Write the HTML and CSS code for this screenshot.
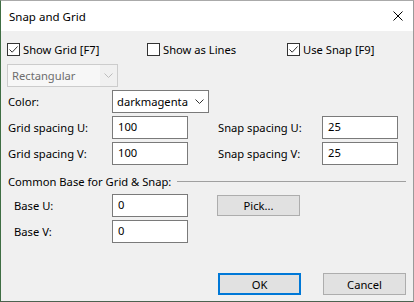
FILE: index.html
```html
<!DOCTYPE html>
<html lang="en">

<head>
    <meta charset="UTF-8">
    <title>Snap and Grid</title>
    <link rel="stylesheet" href="styles.css">
</head>

<body>
    <div class="window">
        <div class="titlebar">
            <span class="title">Snap and Grid</span>
            <svg class="close" width="10" height="10" viewBox="0 0 10 10">
                <path d="M0.5 0.5 L9.5 9.5 M9.5 0.5 L0.5 9.5" stroke="#000" stroke-width="1" />
            </svg>
        </div>

        <div class="content">
            <div class="checks">
                <label class="check">
                    <span class="box">
                        <svg width="11" height="11" viewBox="0 0 11 11"><path d="M1.5 5.5 L4.2 8.2 L9.5 2.5" fill="none" stroke="#333" stroke-width="1" /></svg>
                    </span>
                    Show Grid [F7]
                </label>
                <label class="check">
                    <span class="box"></span>
                    Show as Lines
                </label>
                <label class="check">
                    <span class="box">
                        <svg width="11" height="11" viewBox="0 0 11 11"><path d="M1.5 5.5 L4.2 8.2 L9.5 2.5" fill="none" stroke="#333" stroke-width="1" /></svg>
                    </span>
                    Use Snap [F9]
                </label>
            </div>

            <div class="combo disabled">
                <span class="combo-text">Rectangular</span>
                <span class="combo-arrow">
                    <svg width="9" height="5" viewBox="0 0 9 5"><path d="M0.5 0.5 L4.5 4.5 L8.5 0.5" fill="none" stroke="#bcbcbc" /></svg>
                </span>
            </div>

            <div class="form">
                <span class="lbl">Color:</span>
                <div class="combo color">
                    <span class="combo-text">darkmagenta</span>
                    <span class="combo-arrow">
                        <svg width="9" height="5" viewBox="0 0 9 5"><path d="M0.5 0.5 L4.5 4.5 L8.5 0.5" fill="none" stroke="#333" /></svg>
                    </span>
                </div>
                <span></span><span></span><span></span>

                <span class="lbl">Grid spacing U:</span>
                <div class="field">100</div>
                <span></span>
                <span class="lbl">Snap spacing U:</span>
                <div class="field">25</div>

                <span class="lbl">Grid spacing V:</span>
                <div class="field">100</div>
                <span></span>
                <span class="lbl">Snap spacing V:</span>
                <div class="field">25</div>
            </div>

            <div class="group">
                <span>Common Base for Grid &amp; Snap:</span>
                <div class="rule"></div>
            </div>

            <div class="form base">
                <span class="lbl">Base U:</span>
                <div class="field">0</div>
                <span></span>
                <div class="btn pick">Pick...</div>
                <span></span>

                <span class="lbl">Base V:</span>
                <div class="field">0</div>
                <span></span><span></span><span></span>
            </div>

            <div class="buttons">
                <div class="btn default">OK</div>
                <div class="btn">Cancel</div>
            </div>
        </div>
    </div>
</body>

</html>
```

FILE: styles.css
```css
body {
    margin: 0;
    font-family: "Noto Sans", "Open Sans", sans-serif;
    font-size: 11.2px;
    color: #000;
}

.window {
    width: 414px;
    height: 302px;
    box-sizing: border-box;
    background-color: #f0f0f0;
    border-top: 1px solid #aaaaaa;
    border-right: 1px solid #9a9a9a;
    border-left: 1px solid #3f6e44;
    border-bottom: 1px solid #4d6250;
    overflow: hidden;
}

.titlebar {
    height: 30px;
    background-color: #fff;
    display: flex;
    align-items: center;
    justify-content: space-between;
    padding: 0 10px 0 8px;
}

.title {
    font-size: 11.5px;
}

.content {
    padding: 11px 0 0 6px;
}

.checks {
    display: flex;
    height: 14px;
}

.check {
    display: flex;
    align-items: center;
    flex: 0 0 140px;
    gap: 3px;
}

.box {
    flex: 0 0 11px;
    height: 11px;
    border: 1px solid #333;
    background-color: #fff;
    display: flex;
}

.combo {
    height: 23px;
    box-sizing: border-box;
    display: flex;
    align-items: center;
}

.combo.disabled {
    margin-top: 8px;
    width: 111px;
    border: 1px solid #cccccc;
    color: #6d6d6d;
    background-color: #f0f0f0;
}

.combo.disabled .combo-text {
    background-color: #f7f7f7;
    align-self: stretch;
    display: flex;
    align-items: center;
}

.combo-text {
    flex: 1;
    padding-left: 4px;
}

.combo-arrow {
    width: 17px;
    display: flex;
    justify-content: center;
}

.combo.color {
    width: 97px;
    border: 1px solid #7a7a7a;
    background-color: #fff;
}

.form {
    display: grid;
    grid-template-columns: 105px 76px 29px 105px 76px;
    grid-auto-rows: 23px;
    row-gap: 3px;
    margin-top: 3px;
}

.lbl {
    display: flex;
    align-items: center;
    padding-left: 1px;
}

.field {
    border: 1px solid #7a7a7a;
    background-color: #fff;
    padding-left: 5px;
    display: flex;
    align-items: center;
    padding-bottom: 2px;
}

.group {
    display: flex;
    align-items: center;
    height: 20px;
    margin-top: 6px;
    padding-left: 1px;
}

.rule {
    flex: 1;
    height: 1px;
    background-color: #a0a0a0;
    margin: 0 7px 0 6px;
}

.base {
    margin-top: 3px;
}

.base .lbl {
    padding-left: 7px;
}

.btn {
    width: 83px;
    height: 21px;
    box-sizing: border-box;
    border: 1px solid #adadad;
    background-color: #e1e1e1;
    display: flex;
    align-items: center;
    justify-content: center;
}

.pick {
    align-self: center;
}

.buttons {
    display: flex;
    justify-content: flex-end;
    gap: 22px;
    margin-top: 30px;
    padding-right: 7px;
    height: 22px;
}

.buttons .btn {
    height: 22px;
}

.btn.default {
    border: 2px solid #0078d7;
}
```
